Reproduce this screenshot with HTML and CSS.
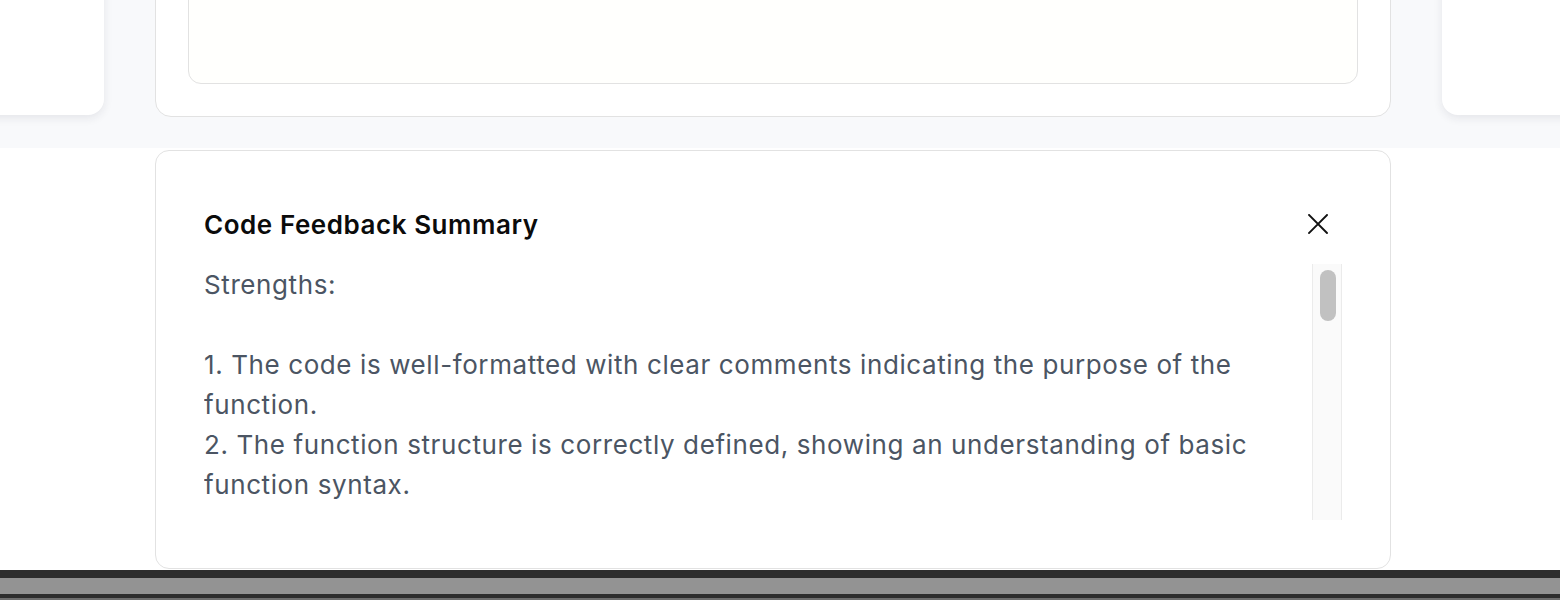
FILE: index.html
```html
<!DOCTYPE html>
<html lang="en">
<head>
<meta charset="utf-8">
<title>Code Feedback Summary</title>
<link rel="stylesheet" href="styles.css">
</head>
<body>
<div class="band">
  <div class="carousel">
    <div class="slide side"></div>
    <div class="slide main">
      <div class="editor"></div>
    </div>
    <div class="slide side"></div>
  </div>
</div>
<div class="modal-wrap">
  <section class="modal">
    <header class="modal-head">
      <h2 class="modal-title">Code Feedback Summary</h2>
      <button class="close" aria-label="Close">
        <svg width="20" height="20" viewBox="0 0 20 20"><path d="M1 1 L19 19 M19 1 L1 19" stroke="#111" stroke-width="1.9" stroke-linecap="square" fill="none"/></svg>
      </button>
    </header>
    <div class="modal-body">
      <div class="feedback">Strengths:

1. The code is well-formatted with clear comments indicating the purpose of the function.
2. The function structure is correctly defined, showing an understanding of basic function syntax.</div>
      <div class="scrollbar"><div class="thumb"></div></div>
    </div>
  </section>
</div>
<footer class="stripes">
  <div class="s1"></div>
  <div class="s2"></div>
  <div class="s3"></div>
  <div class="s4"></div>
</footer>
</body>
</html>
```

FILE: styles.css
```css
* { box-sizing: border-box; }
html, body { margin: 0; padding: 0; }
body {
  width: 1560px;
  height: 600px;
  overflow: hidden;
  background: #ffffff;
  font-family: Inter, "Noto Sans", "Liberation Sans", sans-serif;
  display: flex;
  flex-direction: column;
}
.band {
  height: 148px;
  background: #f8f9fb;
  overflow: hidden;
  display: flex;
  flex-direction: column;
  justify-content: flex-end;
  padding-bottom: 31px;
}
.carousel {
  display: flex;
  justify-content: center;
  gap: 51px;
  padding-right: 14px;
}
.slide {
  flex: 0 0 1236px;
  height: 300px;
  background: #ffffff;
  border-radius: 16px;
}
.side {
  box-shadow: 0 3px 10px rgba(30, 35, 60, 0.09);
  height: 298px;
}
.main {
  border: 1px solid #e2e2e2;
  padding: 32px;
  display: flex;
  flex-direction: column;
  justify-content: flex-end;
}
.editor {
  height: 200px;
  background: #fffffd;
  border: 1px solid #e2e2e2;
  border-radius: 13px;
}
.modal-wrap {
  display: flex;
  justify-content: center;
  padding: 2px 14px 1px 0;
}
.modal {
  width: 1236px;
  height: 419px;
  background: #ffffff;
  border: 1px solid #e2e2e2;
  border-radius: 14px;
  padding: 55px 48px 48px 48px;
  display: flex;
  flex-direction: column;
}
.modal-head {
  height: 36px;
  display: flex;
  align-items: center;
  justify-content: space-between;
  margin-bottom: 22px;
}
.modal-title {
  margin: 0;
  font-size: 26px;
  font-weight: 600;
  color: #0b0b0b;
  letter-spacing: 0.55px;
}
.close {
  width: 48px;
  height: 36px;
  padding: 0;
  border: 0;
  background: transparent;
  display: flex;
  align-items: center;
  justify-content: center;
}
.modal-body {
  flex: 1;
  display: flex;
  min-height: 0;
}
.feedback {
  flex: 1;
  overflow: hidden;
  white-space: pre-line;
  font-size: 26px;
  line-height: 40px;
  letter-spacing: 0.6px;
  color: #4b5563;
  padding-top: 1px;
}
.scrollbar {
  width: 30px;
  background: #fafafa;
  border-left: 1px solid #ebebeb;
  border-right: 1px solid #ebebeb;
  padding: 6px 5px 0 7px;
}
.thumb {
  height: 51px;
  background: #c1c1c1;
  border-radius: 8px;
}
.stripes {
  display: flex;
  flex-direction: column;
}
.s1 { height: 8px; background: #2d2d2d; }
.s2 { height: 16px; background: #939393; }
.s3 { height: 4px; background: #2d2d2d; }
.s4 { height: 2px; background: #6e6e6e; }
```
